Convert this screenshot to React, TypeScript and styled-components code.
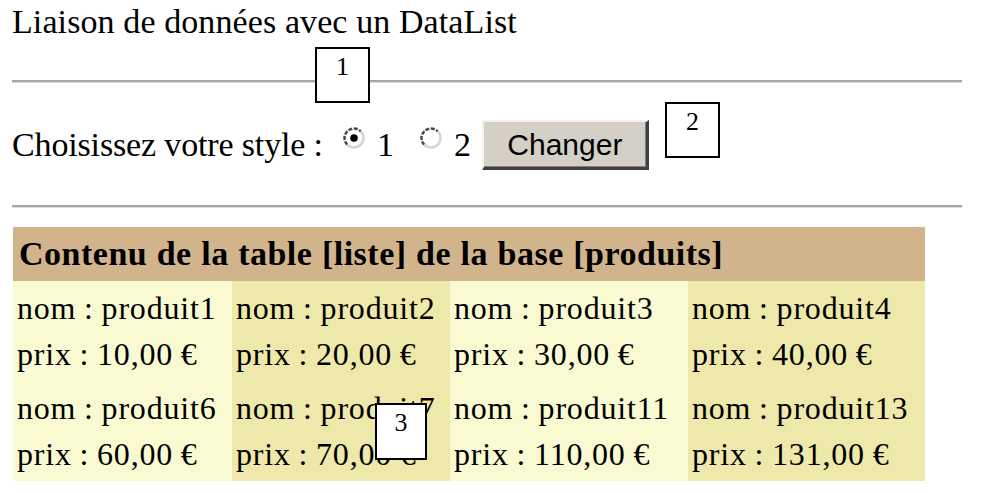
import React from "react"
import styled, { createGlobalStyle } from "styled-components"

const GlobalStyle = createGlobalStyle`
  html, body {
    margin: 0;
    padding: 0;
    background: #fff;
  }
  body {
    font-family: "Liberation Serif", "Times New Roman", serif;
    color: #000;
  }
`

const Page = styled.div`
  position: relative;
  width: 950px;
  padding: 2px 22px 0 12px;
`

const Title = styled.h1`
  margin: 0;
  font-size: 34px;
  font-weight: normal;
  line-height: 40px;
  letter-spacing: 0.1px;
  white-space: nowrap;
`

const Rule = styled.div<{ $top: number }>`
  margin-top: ${p => p.$top}px;
  height: 3px;
  background: #a6a6a6;
  border-bottom: 1px solid #dcdcdc;
  box-sizing: border-box;
`

const StyleRow = styled.form`
  display: flex;
  align-items: center;
  height: 50px;
  margin: 37px 0 0;
  font-size: 34px;
  white-space: nowrap;
`

const Label = styled.span`
  margin-right: 19px;
  letter-spacing: -0.15px;
`

const Choice = styled.label`
  display: flex;
  align-items: center;
  height: 100%;
  margin-right: 25px;

  &:last-of-type {
    margin-right: 11px;
  }

  svg {
    align-self: flex-start;
    margin-top: 6px;
    margin-right: 11px;
  }
`

const Button = styled.button`
  width: 167px;
  height: 50px;
  padding: 0;
  font-family: "Liberation Sans", Arial, sans-serif;
  font-size: 30px;
  color: #000;
  background: #d4d0c8;
  border-style: solid;
  border-width: 2px 3px 3px 2px;
  border-color: #f4f3f0 #404040 #404040 #f4f3f0;
  box-shadow: inset -1px -1px 0 #808080;
`

const DataList = styled.div`
  margin: 19px 0 0 1px;
  width: 912px;
`

const Header = styled.div`
  height: 54px;
  line-height: 54px;
  padding-left: 6px;
  background: #d2b48c;
  font-size: 34px;
  font-weight: bold;
  letter-spacing: 0.5px;
  word-spacing: 0.5px;
  white-space: nowrap;
`

const Grid = styled.div`
  display: grid;
  grid-template-columns: 219px 218px 238px 237px;
`

const Cell = styled.div<{ $alt: boolean }>`
  height: 100px;
  box-sizing: border-box;
  padding: 4px 0 0 4px;
  background: ${p => (p.$alt ? "#eee8aa" : "#fafad2")};
  font-size: 32px;
  line-height: 46px;
  letter-spacing: 0.8px;
  word-spacing: -1px;
  white-space: nowrap;
`

const Callout = styled.div<{ $x: number; $y: number; $w: number; $h: number }>`
  position: absolute;
  left: ${p => p.$x}px;
  top: ${p => p.$y}px;
  width: ${p => p.$w}px;
  height: ${p => p.$h}px;
  box-sizing: border-box;
  border: 2px solid #000;
  background: #fff;
  padding-top: 3px;
  text-align: center;
  font-size: 26px;
  line-height: 30px;
`

const Radio = ({ checked }: { checked?: boolean }) => (
  <svg width="24" height="24" viewBox="0 0 24 24">
    <circle cx="12" cy="12" r="9.5" fill="#fff" />
    <path d="M5.28 18.72 A9.5 9.5 0 0 1 18.72 5.28" fill="none" stroke="#4a4a4a" strokeWidth="2.5" strokeDasharray="4 1.5" />
    <path d="M18.72 5.28 A9.5 9.5 0 0 1 5.28 18.72" fill="none" stroke="#d8d5ce" strokeWidth="2.5" />
    {checked && <circle cx="12" cy="12" r="3.8" fill="#000" />}
  </svg>
)

const produits = [
  { nom: "produit1", prix: "10,00" },
  { nom: "produit2", prix: "20,00" },
  { nom: "produit3", prix: "30,00" },
  { nom: "produit4", prix: "40,00" },
  { nom: "produit6", prix: "60,00" },
  { nom: "produit7", prix: "70,00" },
  { nom: "produit11", prix: "110,00" },
  { nom: "produit13", prix: "131,00" },
]

const App = (): React.ReactElement => {
  return (
    <Page>
      <GlobalStyle />
      <Title>Liaison de données avec un DataList</Title>
      <Rule $top={38} />

      <StyleRow onSubmit={e => e.preventDefault()}>
        <Label>Choisissez votre style :</Label>
        <Choice>
          <Radio checked />
          1
        </Choice>
        <Choice>
          <Radio />
          2
        </Choice>
        <Button type="submit">Changer</Button>
      </StyleRow>

      <Rule $top={35} />

      <DataList>
        <Header>Contenu de la table [liste] de la base [produits]</Header>
        <Grid>
          {produits.map((p, i) => (
            <Cell key={p.nom} $alt={i % 2 === 1}>
              nom : {p.nom}
              <br />
              prix : {p.prix} €
            </Cell>
          ))}
        </Grid>
      </DataList>

      <Callout $x={315} $y={47} $w={55} $h={56}>1</Callout>
      <Callout $x={665} $y={102} $w={55} $h={56}>2</Callout>
      <Callout $x={375} $y={403} $w={52} $h={57}>3</Callout>
    </Page>
  )
}

export default App
